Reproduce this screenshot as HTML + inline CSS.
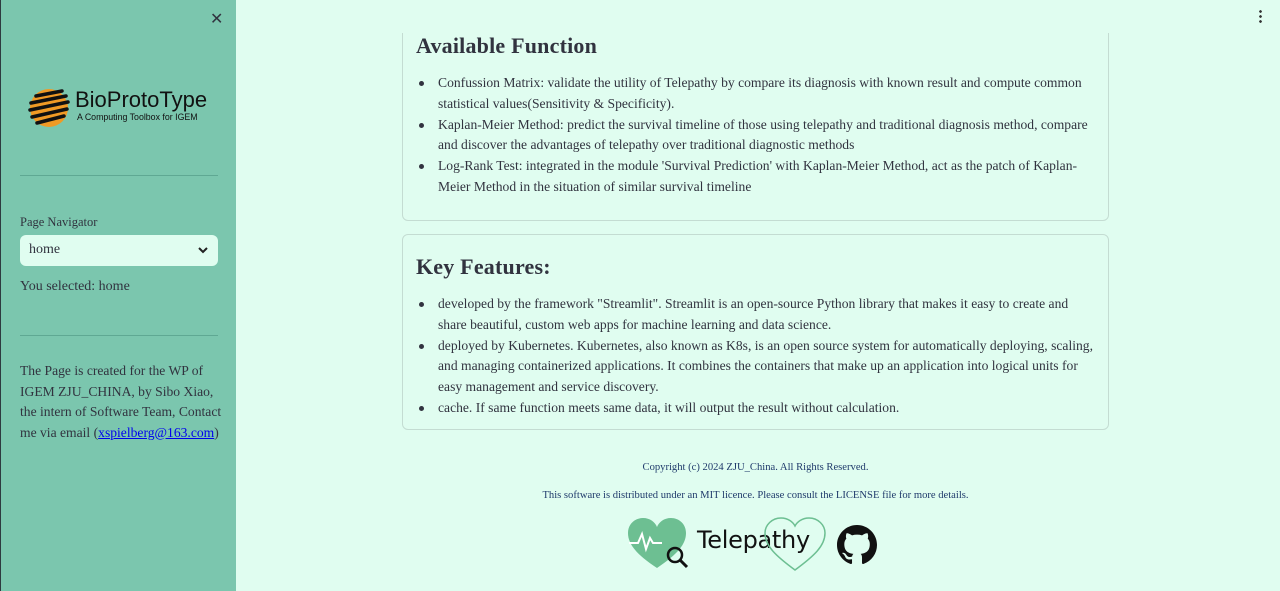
<!DOCTYPE html>
<html><head><meta charset="utf-8"><style>
*{margin:0;padding:0;box-sizing:border-box}
body{width:1280px;height:591px;overflow:hidden;background:#e0fdf0;font-family:"Liberation Serif",serif;color:#31333f;position:relative}
#sb{position:absolute;left:0;top:0;width:236px;height:591px;background:#7bc6ae;box-shadow:inset 1px 0 0 #2e3a40}
.hr{position:absolute;left:20px;width:198px;height:1px;background:#5fa893}
.card{position:absolute;left:402px;width:707px;border:1px solid #c4dcd2;border-radius:6px;padding:0 13px}
h2{font-size:22px;font-weight:bold;color:#31333f;letter-spacing:0.2px}
ul{list-style:none;margin-top:14px}
li{position:relative;padding-left:22px;font-size:13.6px;line-height:20.8px;margin-bottom:0}
li:before{content:"";position:absolute;left:3px;top:8px;width:5px;height:5px;border-radius:50%;background:#31333f}
.foot{position:absolute;left:402px;width:707px;text-align:center;font-size:10.6px;color:#1f3a6b}
</style></head><body>
<div id="sb">
<div style="position:absolute;left:210px;top:9px;font-size:16px;color:#31333f;font-family:'DejaVu Sans'">✕</div>
<svg style="position:absolute;left:28px;top:88px" width="42" height="40" viewBox="0 0 42 40">
<circle cx="21" cy="20" r="19" fill="#f09a25"/>
<g stroke="#111" stroke-width="3.5" stroke-linecap="round"><path d="M8 8 L34 3"/><path d="M3 15 L38 8"/><path d="M2 22 L40 14"/><path d="M4 29 L39 21"/><path d="M9 35 L36 28"/></g></svg>
<div style="position:absolute;left:75px;top:87px;font-family:'Liberation Sans',sans-serif;font-size:22px;color:#111">BioProtoType</div>
<div style="position:absolute;left:77px;top:112px;font-family:'Liberation Sans',sans-serif;font-size:8.8px;color:#111">A Computing Toolbox for IGEM</div>
<div class="hr" style="top:175px"></div>
<div style="position:absolute;left:20px;top:215px;font-size:12.5px">Page Navigator</div>
<div style="position:absolute;left:20px;top:235px;width:198px;height:31px;background:#e0fdf0;border-radius:6px;font-size:14px;padding:7px 9px">home<svg style="position:absolute;right:10px;top:11px" width="10" height="8"><path d="M1 2 L5 6 L9 2" stroke="#222" stroke-width="2" fill="none"/></svg></div>
<div style="position:absolute;left:20px;top:279px;font-size:14px">You selected: home</div>
<div class="hr" style="top:335px"></div>
<div style="position:absolute;left:20px;top:361px;width:212px;font-size:13.6px;line-height:20.5px">The Page is created for the WP of IGEM ZJU_CHINA, by Sibo Xiao, the intern of Software Team, Contact me via email (<span style="color:#0000ee;text-decoration:underline">xspielberg@163.com</span>)</div>
</div>
<div style="position:absolute;left:1259px;top:9px;width:3px;height:14px;background:radial-gradient(circle,#333 1.2px,transparent 1.5px) 0 0/3px 5px"></div>
<div class="card" style="top:20px;height:201px;padding-top:12px">
<h2>Available Function</h2>
<ul>
<li>Confussion Matrix: validate the utility of Telepathy by compare its diagnosis with known result and compute common statistical values(Sensitivity &amp; Specificity).</li>
<li>Kaplan-Meier Method: predict the survival timeline of those using telepathy and traditional diagnosis method, compare and discover the advantages of telepathy over traditional diagnostic methods</li>
<li>Log-Rank Test: integrated in the module 'Survival Prediction' with Kaplan-Meier Method, act as the patch of Kaplan-Meier Method in the situation of similar survival timeline</li>
</ul></div>
<div style="position:absolute;left:396px;top:0;width:720px;height:33px;background:#e0fdf0"></div>
<div class="card" style="top:234px;height:196px;padding-top:19px">
<h2>Key Features:</h2>
<ul>
<li>developed by the framework "Streamlit". Streamlit is an open-source Python library that makes it easy to create and share beautiful, custom web apps for machine learning and data science.</li>
<li>deployed by Kubernetes. Kubernetes, also known as K8s, is an open source system for automatically deploying, scaling, and managing containerized applications. It combines the containers that make up an application into logical units for easy management and service discovery.</li>
<li>cache. If same function meets same data, it will output the result without calculation.</li>
</ul></div>
<div class="foot" style="top:462px">Copyright (c) 2024 ZJU_China. All Rights Reserved.</div>
<div class="foot" style="top:490px">This software is distributed under an MIT licence. Please consult the LICENSE file for more details.</div>
<svg style="position:absolute;left:626px;top:516px" width="66" height="58" viewBox="0 0 66 58">
<path d="M31 52 C10 38 2 28 2 17 C2 8 9 2 17 2 C24 2 29 6 31 11 C33 6 38 2 45 2 C53 2 60 8 60 17 C60 28 52 38 31 52Z" fill="#6dbf92"/>
<path d="M3 27 H12 L16 18 L20 33 L24 22 L27 27 H36" stroke="#fff" stroke-width="2" fill="none"/>
<circle cx="49" cy="39" r="7" fill="none" stroke="#111" stroke-width="2.5"/><path d="M54 44 L61 51" stroke="#111" stroke-width="3"/></svg>
<div style="position:absolute;left:697px;top:526px;font-family:'DejaVu Sans',sans-serif;font-size:24px;color:#111;letter-spacing:-0.3px">Telepathy</div>
<svg style="position:absolute;left:762px;top:516px" width="66" height="58" viewBox="0 0 66 58">
<path d="M33 54 C14 40 3 30 3 17 C3 9 10 2 19 2 C26 2 31 6 33 10 C35 6 40 2 47 2 C56 2 63 9 63 17 C63 30 52 40 33 54Z" fill="none" stroke="#6dbf92" stroke-width="1.5"/></svg>
<svg style="position:absolute;left:837px;top:525px" width="40" height="40" viewBox="0 0 16 16"><path fill="#111" d="M8 0C3.58 0 0 3.58 0 8c0 3.54 2.29 6.530 5.47 7.59.4.07.55-.17.55-.38 0-.19-.01-.82-.01-1.49-2.01.37-2.53-.49-2.69-.94-.09-.23-.48-.94-.82-1.13-.28-.15-.68-.52-.01-.53.63-.01 1.08.58 1.23.82.72 1.21 1.87.87 2.33.66.07-.52.28-.87.51-1.07-1.78-.2-3.64-.89-3.64-3.95 0-.87.31-1.59.82-2.15-.08-.2-.36-1.02.08-2.12 0 0 .67-.21 2.2.82.64-.18 1.32-.27 2-.27.68 0 1.36.09 2 .27 1.53-1.04 2.2-.82 2.2-.82.44 1.1.16 1.92.08 2.12.51.56.82 1.27.82 2.15 0 3.07-1.87 3.75-3.65 3.95.29.25.54.73.54 1.48 0 1.07-.01 1.93-.01 2.2 0 .21.15.46.55.38A8.013 8.013 0 0016 8c0-4.42-3.58-8-8-8z"/></svg>
</body></html>
